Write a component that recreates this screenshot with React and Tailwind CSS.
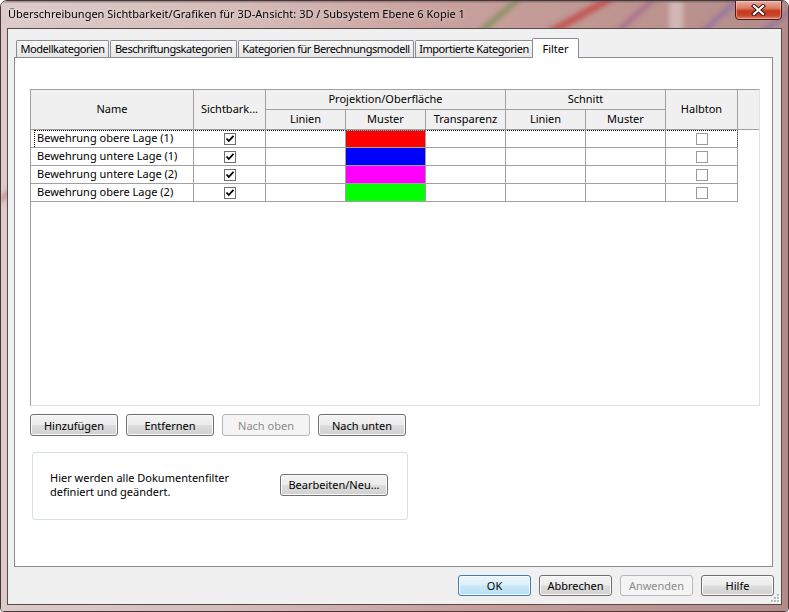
import React from "react";

const rows = [
  { name: "Bewehrung obere Lage (1)", color: "bg-[#ff0000]" },
  { name: "Bewehrung untere Lage (1)", color: "bg-[#0000ff]" },
  { name: "Bewehrung untere Lage (2)", color: "bg-[#ff00ff]" },
  { name: "Bewehrung obere Lage (2)", color: "bg-[#00ff00]" },
];

const tabs = [
  { label: "Modellkategorien", w: "w-[93px]" },
  { label: "Beschriftungskategorien", w: "w-[127px]" },
  { label: "Kategorien für Berechnungsmodell", w: "w-[176px]" },
  { label: "Importierte Kategorien", w: "w-[118px]" },
];

function Button({ children, className = "", disabled = false, primary = false }) {
  let look =
    "border-[#707070] text-black bg-[linear-gradient(to_bottom,#f3f3f3_0%,#ececec_48%,#dddddd_52%,#d0d0d0_100%)] shadow-[inset_0_0_0_1px_#fbfbfb]";
  if (primary)
    look =
      "border-[#3c7fb1] text-black bg-[linear-gradient(to_bottom,#eaf6fd_0%,#dcf0fb_48%,#c9e7f7_52%,#b9dff3_100%)] shadow-[inset_0_0_0_1px_#f5fbff]";
  if (disabled) look = "border-[#b5b9bc] text-[#8a8a8a] bg-[#f4f4f4]";
  return (
    <button
      type="button"
      className={`flex items-center justify-center rounded-[3px] border leading-none whitespace-nowrap ${look} ${className}`}
    >
      {children}
    </button>
  );
}

function CheckBox({ checked }) {
  if (!checked)
    return <div className="w-[12px] h-[12px] border border-[#9a9a9a] bg-white" />;
  return (
    <div className="w-[12px] h-[12px] border border-[#6f6f6f] bg-white flex items-center justify-center">
      <svg width="10" height="10" viewBox="0 0 10 10">
        <path d="M1.5 4.5 L3.8 7 L8.5 1.8" fill="none" stroke="#000" strokeWidth="1.8" />
      </svg>
    </div>
  );
}

// aero glass behind the title bar and the frame
function Glass() {
  return (
    <svg className="absolute inset-0" width="789" height="612">
      <defs>
        <linearGradient id="glass" x1="0" x2="1" y1="0" y2="0">
          <stop offset="0" stopColor="#dccbc9" />
          <stop offset="0.3" stopColor="#d5bcb9" />
          <stop offset="0.55" stopColor="#c9a29f" />
          <stop offset="0.8" stopColor="#bd9490" />
          <stop offset="1" stopColor="#b38c8a" />
        </linearGradient>
        <filter id="soft" x="-20%" y="-20%" width="140%" height="140%">
          <feGaussianBlur stdDeviation="2.5" />
        </filter>
      </defs>
      <rect width="789" height="612" fill="url(#glass)" />
      <g filter="url(#soft)" fill="none" opacity="0.75">
        <line x1="520" y1="-4" x2="478" y2="32" stroke="#6f8c48" strokeWidth="5" />
        <line x1="612" y1="-4" x2="548" y2="32" stroke="#c23c3a" strokeWidth="7" />
        <line x1="655" y1="-4" x2="615" y2="32" stroke="#9a5c8c" strokeWidth="4" />
        <line x1="740" y1="-4" x2="700" y2="32" stroke="#8a6aa8" strokeWidth="5" />
        <line x1="789" y1="10" x2="760" y2="32" stroke="#8466a4" strokeWidth="4" />
        <rect x="668" y="0" width="14" height="30" fill="#d9c4c2" />
        <line x1="0" y1="200" x2="8" y2="190" stroke="#b66e6c" strokeWidth="4" />
      </g>
      <rect x="0" y="0" width="789" height="1.5" fill="#6a5a58" opacity="0.5" />
    </svg>
  );
}

export default function App() {
  const head = "border-r border-b border-[#a0a0a0] bg-[#f0f0f0] flex items-center justify-center whitespace-nowrap";
  const cell = "border-r border-b border-[#a0a0a0] bg-white";

  return (
    <div className="relative w-[789px] h-[612px] overflow-hidden rounded-t-[7px] rounded-b-[4px] border border-[#463838] font-['Noto_Sans',sans-serif] text-[11px] text-black">
      <Glass />

      {/* close button */}
      <div className="absolute right-[6px] top-[-1px] z-10 w-[47px] h-[20px] rounded-b-[4px] border border-[#4b1c14] bg-[linear-gradient(to_bottom,#eab0a3_0%,#dc7a64_40%,#c53a1e_55%,#c9452a_80%,#e0826a_100%)] shadow-[inset_0_0_0_1px_rgba(255,220,210,0.45)] flex items-center justify-center">
        <svg width="15" height="12" viewBox="0 0 15 12">
          <path d="M3 2 L12 10 M12 2 L3 10" stroke="#3a1810" strokeWidth="4.2" strokeLinecap="square" />
          <path d="M3 2 L12 10 M12 2 L3 10" stroke="#ffffff" strokeWidth="2.2" strokeLinecap="square" />
        </svg>
      </div>

      <div className="relative flex flex-col">
        {/* title */}
        <div className="h-[27px] pl-[7px] flex items-center text-[11px] whitespace-nowrap [text-shadow:0_0_5px_rgba(255,255,255,0.7)]">
          Überschreibungen Sichtbarkeit/Grafiken für 3D-Ansicht: 3D / Subsystem Ebene 6 Kopie 1
        </div>

        {/* client area */}
        <div className="relative mx-[6px] h-[577px] border border-[#55494a] bg-[#f0f0f0] flex flex-col">
          <div className="flex items-end h-[19px] mt-[9px] ml-[8px] gap-[1px]">
            {tabs.map((t) => (
              <div
                key={t.label}
                className={`${t.w} h-[17px] flex items-center justify-center whitespace-nowrap tracking-[-0.45px] rounded-t-[2px] border border-b-0 border-[#898c95] bg-[linear-gradient(to_bottom,#f7f7f7,#e6e6e6)] shadow-[inset_0_1px_0_#ffffff]`}
              >
                {t.label}
              </div>
            ))}
            <div className="relative z-10 -ml-[2px] mb-[-1px] w-[47px] h-[20px] flex items-start pt-[2px] justify-center rounded-t-[2px] border border-b-0 border-[#898c95] bg-white">
              Filter
            </div>
          </div>

          {/* tab page */}
          <div className="ml-[6px] w-[759px] h-[510px] border border-[#898c95] bg-white flex flex-col">
            <div className="relative ml-[15px] mt-[31px] w-[730px] h-[317px] border border-t-[#a0a0a0] border-l-[#a0a0a0] border-r-[#e2e2e2] border-b-[#e2e2e2] bg-white">
              <div className="grid grid-cols-[163px_72px_80px_80px_80px_80px_80px_72px_1fr] grid-rows-[20px_20px_18px_18px_18px_18px]">
                <div className={`${head} row-span-2`}>Name</div>
                <div className={`${head} row-span-2`}>Sichtbark...</div>
                <div className={`${head} col-span-3`}>Projektion/Oberfläche</div>
                <div className={`${head} col-span-2`}>Schnitt</div>
                <div className={`${head} row-span-2`}>Halbton</div>
                <div className="row-span-2 bg-[#f0f0f0] border-b border-[#a0a0a0]" />
                <div className={head}>Linien</div>
                <div className={head}>Muster</div>
                <div className={head}>Transparenz</div>
                <div className={head}>Linien</div>
                <div className={head}>Muster</div>

                {rows.map((r) => (
                  <React.Fragment key={r.name}>
                    <div className={`${cell} flex items-center pl-[6px] whitespace-nowrap`}>{r.name}</div>
                    <div className={`${cell} flex items-center justify-center`}>
                      <CheckBox checked />
                    </div>
                    <div className={cell} />
                    <div className={`border-r border-b border-[#a0a0a0] ${r.color}`} />
                    <div className={cell} />
                    <div className={cell} />
                    <div className={cell} />
                    <div className={`${cell} flex items-center justify-center`}>
                      <CheckBox checked={false} />
                    </div>
                    <div />
                  </React.Fragment>
                ))}
              </div>

              {/* focus rectangle on the current row */}
              <div className="absolute left-[3px] top-[40px] w-[704px] h-[17px] border-t border-l border-r border-dotted border-white mix-blend-difference pointer-events-none" />
            </div>

            <div className="flex gap-[8px] ml-[15px] mt-[8px]">
              <Button className="w-[88px] h-[22px]">Hinzufügen</Button>
              <Button className="w-[88px] h-[22px]">Entfernen</Button>
              <Button className="w-[88px] h-[22px]" disabled>
                Nach oben
              </Button>
              <Button className="w-[88px] h-[22px]">Nach unten</Button>
            </div>

            <div className="ml-[17px] mt-[16px] w-[376px] h-[68px] rounded-[3px] border border-[#d5dfe5] flex items-center justify-between pl-[17px] pr-[19px] pb-[3px]">
              <div className="leading-[14px] whitespace-nowrap">
                <div>Hier werden alle Dokumentenfilter</div>
                <div>definiert und geändert.</div>
              </div>
              <Button className="w-[108px] h-[22px]">Bearbeiten/Neu...</Button>
            </div>
          </div>

          <div className="flex justify-end gap-[8px] mt-[8px] mr-[7px]">
            <Button primary className="w-[73px] h-[21px]">
              OK
            </Button>
            <Button className="w-[73px] h-[21px]">Abbrechen</Button>
            <Button className="w-[73px] h-[21px]" disabled>
              Anwenden
            </Button>
            <Button className="w-[73px] h-[21px]">Hilfe</Button>
          </div>

          {/* size grip */}
          <svg className="absolute right-[1px] bottom-[1px]" width="10" height="10" viewBox="0 0 10 10">
            {[
              [7, 1],
              [4, 4],
              [7, 4],
              [1, 7],
              [4, 7],
              [7, 7],
            ].map(([x, y]) => (
              <g key={`${x}-${y}`}>
                <rect x={x + 1} y={y + 1} width="2" height="2" fill="#ffffff" />
                <rect x={x} y={y} width="2" height="2" fill="#b9b9b9" />
              </g>
            ))}
          </svg>
        </div>
      </div>
    </div>
  );
}
